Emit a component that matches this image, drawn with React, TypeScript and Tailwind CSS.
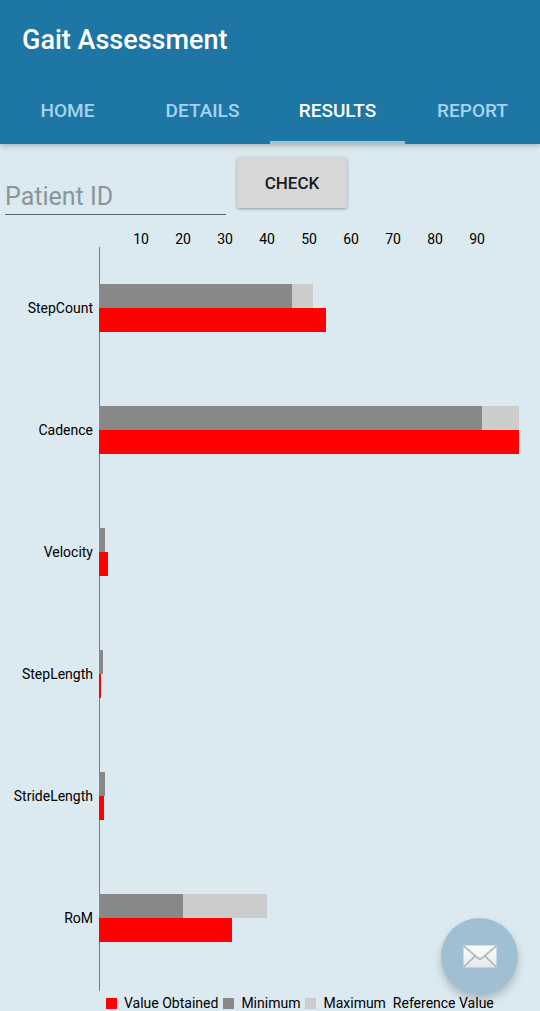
const TABS = ["HOME", "DETAILS", "RESULTS", "REPORT"];
const TICKS = [10, 20, 30, 40, 50, 60, 70, 80, 90];

type Measure = { name: string; minimum: number; maximum: number; obtained: number };

const MEASURES: Measure[] = [
  { name: "StepCount", minimum: 46, maximum: 51, obtained: 54 },
  { name: "Cadence", minimum: 91.2, maximum: 100, obtained: 100 },
  { name: "Velocity", minimum: 1.4, maximum: 1.4, obtained: 2.1 },
  { name: "StepLength", minimum: 0.9, maximum: 0.9, obtained: 0.5 },
  { name: "StrideLength", minimum: 1.4, maximum: 1.4, obtained: 1.2 },
  { name: "RoM", minimum: 20, maximum: 40, obtained: 31.6 },
];

function Header() {
  return (
    <header className="relative bg-[#1d76a4] shadow-[0_1px_6px_rgba(0,0,0,0.3)]">
      <h1 className="flex h-20 items-center px-[22px] text-[27px] leading-8 font-medium text-white">
        Gait Assessment
      </h1>
      <nav className="grid h-16 grid-cols-4">
        {TABS.map((tab) => (
          <button
            key={tab}
            type="button"
            aria-current={tab === "RESULTS" ? "page" : undefined}
            className={
              tab === "RESULTS"
                ? "border-b-3 border-[#a3c0d6] pt-[2px] text-[19px] font-medium text-white"
                : "border-b-3 border-transparent pt-[2px] text-[19px] font-medium text-[#a4d3f2]"
            }
          >
            {tab}
          </button>
        ))}
      </nav>
    </header>
  );
}

function PatientForm() {
  return (
    <form className="flex items-end gap-[11px] px-[5px] pt-3" onSubmit={(e) => e.preventDefault()}>
      <input
        aria-label="Patient ID"
        placeholder="Patient ID"
        className="mt-5 h-[39px] w-[221px] border-b border-[#5c666c] bg-transparent pt-[2px] text-[25px] text-[#222] outline-none placeholder:text-[#89949c]"
      />
      <button
        type="submit"
        className="mb-[7px] h-[51px] w-[110px] rounded-xs bg-[#d6d8d7] pt-[2px] text-[17px] font-medium text-[#1c1c1c] shadow-[0_1px_3px_rgba(0,0,0,0.35)]"
      >
        CHECK
      </button>
    </form>
  );
}

function MeasureRow({ name, minimum, maximum, obtained }: Measure) {
  return (
    <div className="flex h-[122px] items-center">
      <div className="w-[99px] shrink-0 pr-[6px] text-right">{name}</div>
      <div className="min-w-0 flex-1">
        <div className="flex h-6">
          <div className="bg-[#888888]" style={{ width: `${minimum}%` }} />
          <div className="bg-[#cccccc]" style={{ width: `${maximum - minimum}%` }} />
        </div>
        <div className="h-6 bg-[#ff0000]" style={{ width: `${obtained}%` }} />
      </div>
    </div>
  );
}

function LegendItem({ swatch, label }: { swatch: string; label: string }) {
  return (
    <div className="flex items-center gap-[7px]">
      <span className={`size-[11px] ${swatch}`} />
      <span>{label}</span>
    </div>
  );
}

function Chart() {
  return (
    <section className="pt-4 pr-[21px] text-[14px] leading-4 text-black">
      <div className="ml-[99px] grid grid-cols-20">
        <span />
        {TICKS.map((tick) => (
          <span key={tick} className="col-span-2 text-center">
            {tick}
          </span>
        ))}
      </div>
      <div className="relative pb-3">
        <div className="absolute inset-y-0 left-[99px] w-px bg-[#777f84]" />
        <div className="relative">
          {MEASURES.map((measure) => (
            <MeasureRow key={measure.name} {...measure} />
          ))}
        </div>
      </div>
      <div className="flex h-5 items-end gap-[5px] pl-[106px] whitespace-pre">
        <LegendItem swatch="bg-[#ff0000]" label="Value Obtained" />
        <LegendItem swatch="bg-[#888888]" label="Minimum" />
        <LegendItem swatch="bg-[#cccccc]" label="Maximum  Reference Value" />
      </div>
    </section>
  );
}

function MailButton() {
  return (
    <button
      type="button"
      aria-label="Email results"
      className="fixed right-[22px] bottom-4 flex size-[77px] items-center justify-center rounded-full bg-[#a1bfd2] shadow-[0_5px_9px_rgba(0,0,0,0.2)]"
    >
      <svg viewBox="0 0 34 23" className="w-[34px]" aria-hidden="true">
        <defs>
          <linearGradient id="paper" x1="0" y1="0" x2="0" y2="1">
            <stop offset="0" stopColor="#ffffff" />
            <stop offset="1" stopColor="#e6e7e9" />
          </linearGradient>
        </defs>
        <rect x="0.5" y="0.5" width="33" height="22" rx="0.6" fill="url(#paper)" />
        <path
          d="M0.8 1 L14.6 13 Q17 15 19.4 13 L33.2 1 M0.8 22 L12 11 M33.2 22 L22 11"
          fill="none"
          stroke="#b4bcc4"
          strokeWidth="1.8"
        />
      </svg>
    </button>
  );
}

export default function App() {
  return (
    <main className="min-h-screen bg-[#dbe9f0] font-[Roboto,sans-serif]">
      <Header />
      <PatientForm />
      <Chart />
      <MailButton />
    </main>
  );
}
